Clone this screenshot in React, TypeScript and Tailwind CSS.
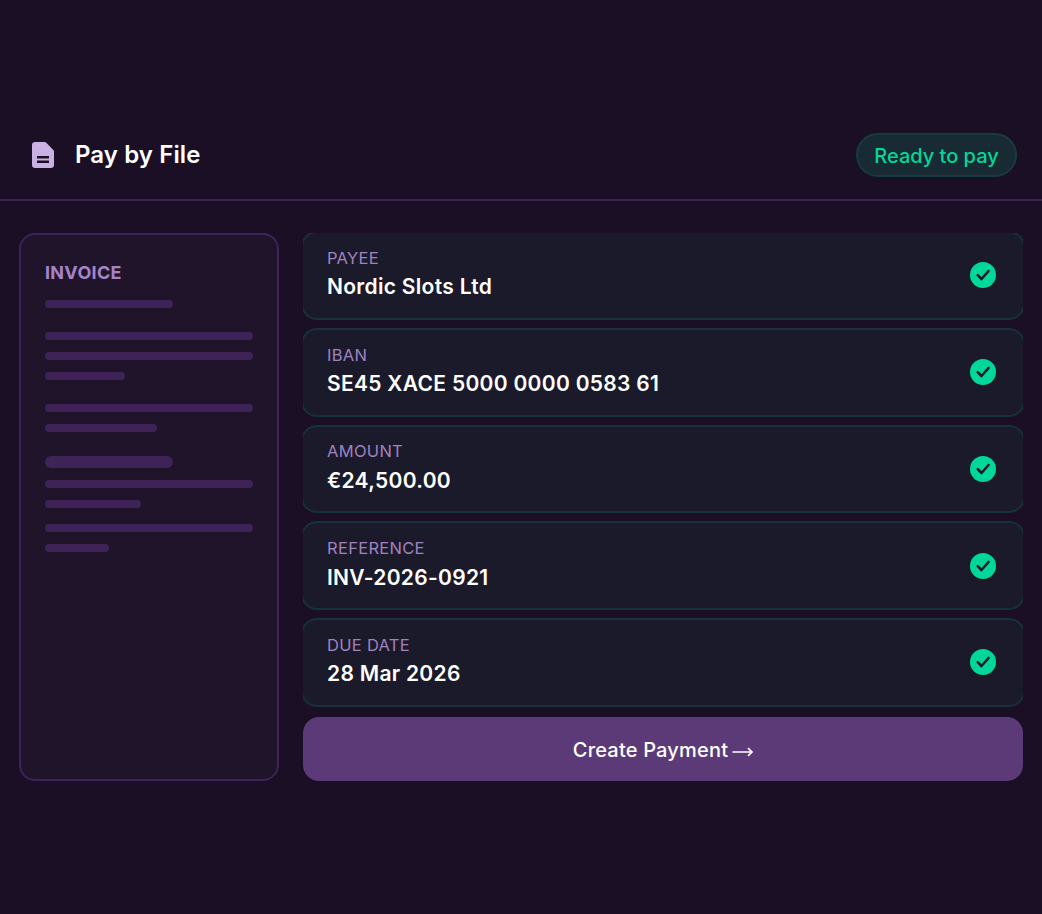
const fields = [
  { label: "PAYEE", value: "Nordic Slots Ltd" },
  { label: "IBAN", value: "SE45 XACE 5000 0000 0583 61" },
  { label: "AMOUNT", value: "€24,500.00" },
  { label: "REFERENCE", value: "INV-2026-0921" },
  { label: "DUE DATE", value: "28 Mar 2026" },
];

const FileIcon = () => (
  <svg width="22" height="26" viewBox="0 0 22 26" className="shrink-0">
    <path
      fillRule="evenodd"
      fill="#c9b1e6"
      d="M3 0h9.600c.6 0 1.100.2 1.500.6l7.200 7.300c.4.400.7.900.7 1.500V23c0 1.700-1.300 3-3 3H3c-1.700 0-3-1.300-3-3V3c0-1.700 1.300-3 3-3zM5 14v2.500h12V14zM5 18.500V21h12v-2.500z"
    />
  </svg>
);

const CheckIcon = () => (
  <svg width="26" height="26" viewBox="0 0 26 26" className="shrink-0">
    <circle cx="13" cy="13" r="13" fill="#00d899" />
    <path d="M7.700 13.200l3.800 3.800 7-8" fill="none" stroke="#1a1a2a" strokeWidth="2.600" strokeLinecap="round" strokeLinejoin="round" />
  </svg>
);

const ArrowIcon = () => (
  <svg width="21" height="10" viewBox="0 0 21 10" className="mt-[3px] shrink-0">
    <path d="M0.500 5h19M16 1.200l4 3.800-4 3.800" fill="none" stroke="#fff" strokeWidth="1.600" />
  </svg>
);

const Bar = ({ className }: { className: string }) => <div className={`rounded-full bg-[#3e2358] ${className}`} />;

const App = () => {
  return (
    <div className="flex h-[914px] w-[1042px] flex-col justify-center bg-[#1a0f24] font-['Inter',sans-serif] text-white">
      <header className="flex h-[68px] items-start justify-between border-b-2 border-[#3e2358] pl-[32px] pr-[25px]">
        <div className="flex h-11 items-center gap-[21px]">
          <FileIcon />
          <h1 className="text-[24px] leading-none font-semibold tracking-[0.1px]">Pay by File</h1>
        </div>
        <div className="flex h-11 w-[161px] items-center justify-center rounded-full border-2 border-[#173c3f] bg-[#182a34] pt-[2px] text-[20px] font-medium text-[#00d899]">
          Ready to pay
        </div>
      </header>

      <main className="mt-[32px] flex gap-6 px-[19px]">
        <section className="h-[548px] w-[260px] rounded-2xl border-2 border-[#3e2358] bg-[#20142a] px-6 pt-6">
          <h2 className="text-[18px] leading-[28px] font-bold tracking-[0.3px] text-[#a584c9]">INVOICE</h2>
          <Bar className="mt-[13px] h-2 w-32" />
          <Bar className="mt-6 h-2 w-[208px]" />
          <Bar className="mt-3 h-2 w-[208px]" />
          <Bar className="mt-3 h-2 w-20" />
          <Bar className="mt-6 h-2 w-[208px]" />
          <Bar className="mt-3 h-2 w-28" />
          <Bar className="mt-6 h-3 w-32" />
          <Bar className="mt-3 h-2 w-[208px]" />
          <Bar className="mt-3 h-2 w-24" />
          <Bar className="mt-4 h-2 w-[208px]" />
          <Bar className="mt-3 h-2 w-16" />
        </section>

        <div className="w-[720px]">
          <div className="h-[474px] overflow-hidden">
            <div className="-mx-0.5 -mt-[2px] flex flex-col gap-2">
              {fields.map((field) => (
                <div
                  key={field.label}
                  className="flex h-[88.75px] items-center justify-between rounded-2xl border-2 border-[#173238] bg-[#1a1a2a] pl-6 pr-[27px]"
                >
                  <div className="pb-[2.5px]">
                    <div className="mb-[2.5px] text-[16.500px] leading-[24px] tracking-[0.3px] text-[#a082c0]">{field.label}</div>
                    <div className="text-[21px] leading-[30px] font-semibold tracking-[0.3px]">{field.value}</div>
                  </div>
                  <CheckIcon />
                </div>
              ))}
            </div>
          </div>
          <button className="mt-2.5 flex h-16 w-full items-center justify-center gap-1 rounded-2xl bg-[#5c3a78] pt-[2px] text-[20px] font-medium tracking-[0.2px]">
            Create Payment <ArrowIcon />
          </button>
        </div>
      </main>
    </div>
  );
};

export default App;
